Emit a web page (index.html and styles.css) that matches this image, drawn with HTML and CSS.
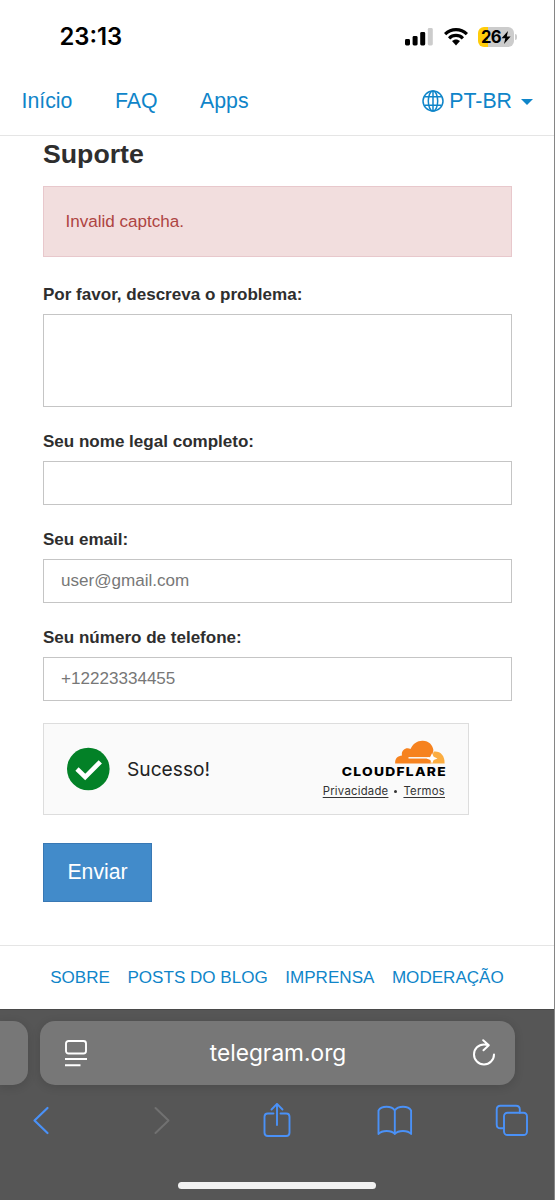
FILE: index.html
```html
<!DOCTYPE html>
<html lang="pt-BR">
<head>
<meta charset="utf-8">
<meta name="viewport" content="width=device-width">
<title>Suporte</title>
<link rel="stylesheet" href="styles.css">
</head>
<body>
<div class="screen">
  <header class="status">
    <span class="clock">23:13</span>
    <div class="status-icons">
      <svg class="signal" width="28" height="18" viewBox="0 0 28 18"><g fill="#000"><rect x="0" y="11" width="5" height="6.500" rx="1.4"/><rect x="7.6" y="8" width="5" height="9.500" rx="1.4"/><rect x="15.2" y="4" width="5" height="13.5" rx="1.4"/></g><rect x="22.8" y="0" width="5" height="17.500" rx="1.4" fill="#ccc"/></svg>
      <svg class="wifi" width="24" height="18" viewBox="0 0 24 18"><g fill="none" stroke="#000" stroke-width="3.2"><path d="M1.1 6.1C7.3.1 16.7.1 22.9 6.1"/><path d="M5.1 10.3c3.9-3.8 9.9-3.8 13.8 0"/></g><path d="M8 13c2.3-2.1 5.7-2.1 8 0l-4 4.4z"/></svg>
      <div class="battery"><span>26</span><svg width="10" height="13" viewBox="0 0 10 13"><path d="M7 0 .5 7.3h3.8L3 13l6.6-7.4H5.8z"/></svg></div>
      <i class="battery-tip"></i>
    </div>
  </header>
  <nav class="nav">
    <a>Início</a><a>FAQ</a><a>Apps</a>
    <a class="lang">
      <svg width="22" height="22" viewBox="0 0 22 22" fill="none" stroke="#0f85c9" stroke-width="1.5"><circle cx="11" cy="11" r="10"/><ellipse cx="11" cy="11" rx="4.7" ry="10"/><path d="M11 1v20M2.2 6.7h17.6M2.2 15.3h17.6"/></svg>
      <span>PT-BR</span><i class="caret"></i>
    </a>
  </nav>
  <main class="content">
    <h1>Suporte</h1>
    <div class="alert">Invalid captcha.</div>
    <form>
      <label>Por favor, descreva o problema:</label>
      <div class="field area"></div>
      <label>Seu nome legal completo:</label>
      <div class="field"></div>
      <label>Seu email:</label>
      <div class="field">user@gmail.com</div>
      <label>Seu número de telefone:</label>
      <div class="field">+12223334455</div>
      <div class="captcha">
        <svg class="ok" width="44" height="44" viewBox="0 0 44 44"><circle cx="22.300" cy="22" r="21.3" fill="#038127"/><path d="m11 22 8.200 8L34.300 14.800" fill="none" stroke="#fff" stroke-width="4.600"/></svg>
        <span class="success">Sucesso!</span>
        <div class="brand">
          <svg class="cloud" width="50" height="24" viewBox="0 0 50 24"><path fill="#f6821f" d="M.2 23.500C-.3 19 2.500 15.800 7 15.500 5.800 10.500 11 6.600 15.500 9.100 18 3.400 22.500.5 27.800.7c6.200.2 9.800 4.300 10.600 9.400l-1.500 7.200-1.500 6.200z"/><path fill="#fbad41" d="M38.700 11.600c6.500-.8 11.100 3.700 10.900 11.900H35z"/><path d="M13.500 17.800H34" stroke="#fafafa" stroke-width="1.500"/><path fill="#fff" d="m37 13.200 1.700 3.500 3.800 1.700-3.800 1.600-1.700 3.800-1.700-3.800-3.800-1.600 3.800-1.700z"/></svg>
          <strong><span>CLOUDFLARE</span></strong>
          <div class="terms"><a>Privacidade</a><i></i><a>Termos</a></div>
        </div>
      </div>
      <button type="button" class="send">Enviar</button>
    </form>
  </main>
  <footer class="links"><a>SOBRE</a><a>POSTS DO BLOG</a><a>IMPRENSA</a><a>MODERAÇÃO</a></footer>
  <section class="browser">
    <div class="tabs">
      <div class="previous"></div>
      <div class="address">
        <svg width="22" height="27" viewBox="0 0 22 27" fill="none" stroke="#fff" stroke-width="1.900"><rect x="1" y="1" width="20" height="12.500" rx="2.500"/><path d="M0 19h22M0 25.200h15.500"/></svg>
        <span>telegram.org</span>
        <svg class="reload" width="22" height="27" viewBox="0 0 22 27" fill="none" stroke="#fff" stroke-width="2" stroke-linecap="round" stroke-linejoin="round"><path d="M15.500 6.300Q13.500 5.400 11 5.400a10 10 0 1 0 10 10M10.200 1.200l5.600 5-5.300 5"/></svg>
      </div>
      <div></div>
    </div>
    <div class="tools">
      <svg width="36" height="36" viewBox="0 0 36 36" stroke="#4a91f7"><path d="M25.500 6 12.500 18.500 25.500 31" stroke-width="2.200"/></svg>
      <svg width="36" height="36" viewBox="0 0 36 36" stroke="#717171"><path d="m15.500 6 13 12.500-13 12.500" stroke-width="2"/></svg>
      <svg width="36" height="36" viewBox="0 0 36 36" stroke="#4a91f7"><path d="M14.500 11.500H8.800Q5.500 11.500 5.500 14.800v16Q5.500 34 8.800 34h18.400q3.300 0 3.300-3.200v-16q0-3.300-3.300-3.300h-5.700M18 23V2M12.500 7.500 18 1.900l5.500 5.600"/></svg>
      <svg width="36" height="36" viewBox="0 0 36 36" stroke="#4a91f7"><path d="M1.500 32V8.500c3-5 13-5 16.300 0 3.300-5 13.300-5 16.300 0V32c-3.300-4-13-4-16.300 0-3.300-4-13-4-16.300 0zM17.800 8.500V32"/></svg>
      <svg width="36" height="36" viewBox="0 0 36 36" stroke="#4a91f7"><rect x="9" y="10.700" width="23" height="22.300" rx="3.500"/><path d="M9 26.300H5.500q-3.800 0-3.800-3.800V7.500Q1.700 3.700 5.500 3.700H21q3.800 0 3.800 3.800v3.200"/></svg>
    </div>
    <div class="home"></div>
  </section>
</div>
</body>
</html>
```
FILE: styles.css
```css
* { box-sizing: border-box; }
body { margin: 0; background: #fff; font-family: "Liberation Sans", Arial, sans-serif; font-size: 17.07px; color: #2e2e2e; }
.screen { width: 555px; height: 1200px; overflow: hidden; display: flex; flex-direction: column; border-right: 1px solid #858585; }
.status { height: 72px; flex: none; display: flex; align-items: center; padding: 2px 37px 0 59.500px; justify-content: space-between; }
.clock { font: 600 23.8px/28px Inter, sans-serif; color: #000; }
.status-icons { display: flex; align-items: center; }
.wifi { margin: 0 10px 0 11px; }
.battery { width: 36px; height: 20px; border-radius: 6px; background: linear-gradient(90deg, #ffcc0a 10px, #ccc 10px); display: flex; align-items: center; justify-content: center; font: 700 16.700px/20px Inter, sans-serif; letter-spacing: -.7px; color: #000; }
.battery-tip { width: 2px; height: 6px; margin-left: 1px; border-radius: 0 2px 2px 0; background: #ccc; }
.nav { height: 64px; flex: none; display: flex; align-items: center; gap: 42.5px; padding: 0 21px 5px 21.5px; border-bottom: 1px solid #e5e5e5; font-size: 21.3px; color: #0f85c9; }
.lang { margin-left: auto; display: flex; align-items: center; }
.lang svg { margin-top: -1px; }
.lang span { margin: 0 9px 0 5.5px; }
.caret { border: 6px solid transparent; border-top-color: #0f85c9; border-bottom: 0; margin-top: 1px; }
.content { height: 809px; flex: none; padding: 2px 42px 0 43px; }
h1 { margin: 0; font-size: 26.700px; line-height: 32px; height: 48px; }
.alert { height: 71px; border: 1px solid #e8c8cc; background: #f2dede; color: #ae4442; padding: 0 21.500px; line-height: 70px; margin-bottom: 28px; }
label { display: block; font-weight: 700; line-height: 20px; margin-bottom: 9px; font-size: 17.040px; }
.field { height: 44px; border: 1px solid #c5c5c5; padding: 0 17px; line-height: 42px; color: #777; margin-bottom: 25px; }
.area { height: 93px; }
.captcha { width: 426px; height: 92px; margin-top: -3px; border: 1px solid #ddd; background: #fafafa; display: flex; align-items: center; padding: 0 23px 0 22px; }
.success { margin-left: 17px; font: 400 19.200px/24px Inter, sans-serif; color: #222; }
.brand { margin-left: auto; display: flex; flex-direction: column; align-items: flex-end; }
.brand strong { font: 800 11.800px/13px Inter, sans-serif; letter-spacing: 1.100px; margin: 2px -2px 0 0; color: #000; }
.brand strong span { display: block; transform: scaleX(1.170); transform-origin: right; }
.terms { display: flex; align-items: center; font: 400 11.300px/15px Inter, sans-serif; letter-spacing: .25px; margin-top: 5px; color: #333; }
.terms a { text-decoration: underline; text-underline-offset: 2px; }
.terms i { width: 3px; height: 3px; border-radius: 50%; background: #333; margin: 0 6px; }
.send { display: block; width: 109px; height: 59px; margin: 28px 0 0; padding: 0 0 1px; border: 1px solid #3878b4; background: #428bca; color: #fff; font: 21.200px "Liberation Sans", Arial, sans-serif; }
.links { height: 64px; flex: none; border-top: 1px solid #e5e5e5; display: flex; align-items: center; justify-content: center; gap: 17.500px; color: #0f85c9; }
.browser { height: 191px; flex: none; background: #565656; border-top: 1px solid #4a4a4a; padding-top: 11px; }
.tabs { display: grid; grid-template-columns: 28px 475px 28px; gap: 12px; height: 64px; overflow: visible; }
.previous { background: #777; border-radius: 0 15px 15px 0; box-shadow: 0 2px 10px #0002; }
.address { background: #777; border-radius: 15px; box-shadow: 0 2px 10px #0002; display: flex; align-items: center; justify-content: space-between; padding: 0 20px 0 25px; color: #fff; font: 400 22.700px/28px Inter, sans-serif; }
.address span { padding: 0 4px 0 0; }
.reload { margin-top: -2px; }
.tools { display: flex; justify-content: space-between; padding: 17px 23px 0 22px; }
.tools svg { fill: none; stroke-width: 1.900; stroke-linecap: round; stroke-linejoin: round; }
.home { width: 198px; height: 7px; border-radius: 4px; background: #f1f1f1; margin: 43.500px auto 0; }
```
